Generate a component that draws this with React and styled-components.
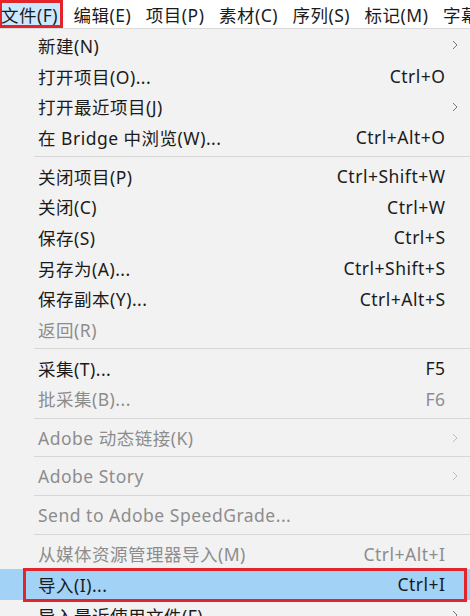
import React from "react";
import styled, { createGlobalStyle } from "styled-components";

const GlobalStyle = createGlobalStyle`
  html, body {
    margin: 0;
    padding: 0;
    background: #f2f2f2;
  }
  body {
    font-family: "Noto Sans", "Noto Sans CJK SC", sans-serif;
  }
`;

const Page = styled.div`
  width: 470px;
  height: 616px;
  overflow: hidden;
  background: #f2f2f2;
  font-family: "Noto Sans", "Noto Sans CJK SC", sans-serif;
  font-size: 17.5px;
  letter-spacing: 0.5px;
  color: #1b1b1b;
`;

const MenuBar = styled.div`
  display: flex;
  height: 28px;
  background: #ffffff;
  border-bottom: 1px solid #dadada;
  white-space: nowrap;
`;

const BarItem = styled.div`
  display: flex;
  align-items: center;
  box-sizing: border-box;
  height: 28px;
  padding: ${(p) => (p.active ? "0 2px 0 1px" : "0 7px 0 7.5px")};
  margin-right: ${(p) => (p.active ? "3px" : "0")};
  background: ${(p) => (p.active ? "#cce8ff" : "transparent")};
  border: ${(p) => (p.active ? "3px solid #e3242b" : "none")};
  border-left: none;
  box-shadow: ${(p) => (p.active ? "inset 2px 0 0 #e3242b" : "none")};
`;

const Dropdown = styled.div`
  display: flex;
  flex-direction: column;
  padding-top: 1px;
`;

const Item = styled.div`
  position: relative;
  display: grid;
  grid-template-columns: 38px 1fr auto 25px;
  align-items: center;
  height: 30.7px;
  white-space: nowrap;
  color: ${(p) => (p.disabled ? "#8d8d8d" : "#1b1b1b")};
  background: ${(p) => (p.selected ? "#a3d2f7" : "transparent")};

  ${(p) =>
    p.selected &&
    `
    &::after {
      content: "";
      position: absolute;
      left: 23px;
      right: 3px;
      top: -1px;
      bottom: -2px;
      border: 3px solid #e3242b;
      pointer-events: none;
    }
  `}
`;

const Label = styled.span`
  grid-column: 2;
`;

const Shortcut = styled.span`
  grid-column: 3;
  text-align: right;
  margin-right: -0.5px;
`;

const Arrow = styled.span`
  grid-column: 4;
  display: flex;
  align-items: center;
  padding-left: 7px;
  color: ${(p) => (p.disabled ? "#bdbdbd" : "#777777")};
`;

const Separator = styled.div`
  height: 8px;
  display: flex;
  align-items: center;
  padding-left: 34px;

  &::before {
    content: "";
    flex: 1;
    height: 1px;
    background: #d7d7d7;
  }
`;

const Chevron = () => (
  <svg width="6" height="10" viewBox="0 0 6 10">
    <path d="M1 1 L5 5 L1 9" fill="none" stroke="currentColor" strokeWidth="1" />
  </svg>
);

const barItems = ["编辑(E)", "项目(P)", "素材(C)", "序列(S)", "标记(M)", "字幕(T)"];

const groups = [
  [
    { label: "新建(N)", sub: true },
    { label: "打开项目(O)...", shortcut: "Ctrl+O" },
    { label: "打开最近项目(J)", sub: true },
    { label: "在 Bridge 中浏览(W)...", shortcut: "Ctrl+Alt+O" },
  ],
  [
    { label: "关闭项目(P)", shortcut: "Ctrl+Shift+W" },
    { label: "关闭(C)", shortcut: "Ctrl+W" },
    { label: "保存(S)", shortcut: "Ctrl+S" },
    { label: "另存为(A)...", shortcut: "Ctrl+Shift+S" },
    { label: "保存副本(Y)...", shortcut: "Ctrl+Alt+S" },
    { label: "返回(R)", disabled: true },
  ],
  [
    { label: "采集(T)...", shortcut: "F5" },
    { label: "批采集(B)...", shortcut: "F6", disabled: true },
  ],
  [{ label: "Adobe 动态链接(K)", sub: true, disabled: true }],
  [{ label: "Adobe Story", sub: true, disabled: true }],
  [{ label: "Send to Adobe SpeedGrade...", disabled: true }],
  [
    { label: "从媒体资源管理器导入(M)", shortcut: "Ctrl+Alt+I", disabled: true },
    { label: "导入(I)...", shortcut: "Ctrl+I", selected: true },
    { label: "导入最近使用文件(F)", sub: true },
  ],
];

export default function App() {
  return (
    <Page>
      <GlobalStyle />
      <MenuBar>
        <BarItem active>文件(F)</BarItem>
        {barItems.map((t) => (
          <BarItem key={t}>{t}</BarItem>
        ))}
      </MenuBar>
      <Dropdown>
        {groups.map((group, gi) => (
          <React.Fragment key={gi}>
            {gi > 0 && <Separator />}
            {group.map((item) => (
              <Item key={item.label} disabled={item.disabled} selected={item.selected}>
                <Label>{item.label}</Label>
                {item.shortcut && <Shortcut>{item.shortcut}</Shortcut>}
                <Arrow disabled={item.disabled}>{item.sub && <Chevron />}</Arrow>
              </Item>
            ))}
          </React.Fragment>
        ))}
      </Dropdown>
    </Page>
  );
}
